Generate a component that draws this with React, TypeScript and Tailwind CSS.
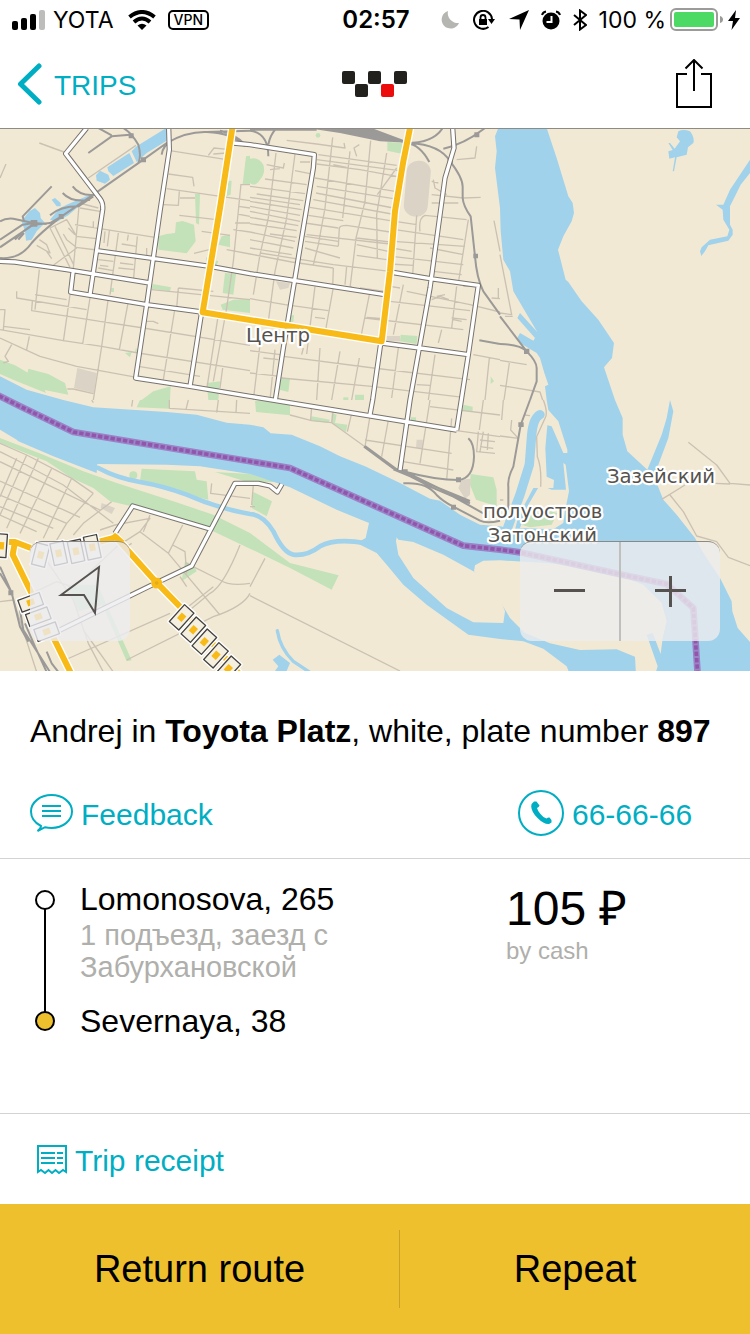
import React from "react";

const tiles = {
  nw: "M118 45L200 75M265 150L408 52M0 150L18 108M510 68L680 95M625 82L642 60L690 65M640 78L680 75M505 138L578 148L582 175M500 182L750 218M538 190L535 232L490 230M540 210H585M538 262L650 275M723 168L700 400L680 540L640 760M723 170H750M715 235L750 240M712 258L750 265M705 285H750M700 305L750 312M605 310L690 322M582 376L640 362M680 365L750 378M238 225L220 420M238 225L295 240M240 240L300 250M225 290L465 328M228 325L290 332M228 358L290 366M150 300L210 418M165 295L222 412M150 300L200 275L230 325M190 318L200 335L225 355M205 300L225 320M110 352L150 375L140 350L118 335M140 370L155 392M160 412L230 360M280 280V300M315 310L312 345M328 308L322 355M355 315L330 500M385 320L382 338M412 325L400 460M365 348L410 355M295 395L340 400M300 412L325 415M295 420L340 428M360 405L400 410M355 420L405 425M118 425L105 545M50 490V510L260 545M105 500L200 515M97 520L95 548L300 580M210 500L190 640M270 510L248 648M325 510L305 655L280 816M385 520L358 665M0 545H15L10 605M10 595L90 605M0 605L190 638L305 655L415 675L750 728M0 630L120 685L230 715L410 748M88 625L80 665M35 650L15 685L25 700L10 705M300 580L430 600L750 652M440 580L460 580L475 587M525 540L490 755M415 715L600 745M655 560L620 785M535 480L530 540M535 480L640 490M455 485L750 515M668 720L660 780M202 783H220L280 797M440 360V385",
  n: "M110 37L200 48L285 60L282 45M320 85L312 60L328 50M78 75L55 270L30 380L10 500M135 78L110 270L75 430L55 580M248 28L225 240L205 350L190 410M300 70L278 270M362 38L345 220L318 330L300 480M410 75L380 260L382 390M440 120L382 200M50 110L100 120L103 105M60 125L90 122M150 102H180M205 80L440 112M200 95L448 128M200 108L330 125L440 145M135 128L180 137M250 110L290 118M45 153L170 170M195 150L435 190M0 175L165 197M200 175L430 212M20 198L160 218M198 195L430 240M0 208L150 230M190 215L425 258M0 220L155 245M180 238L420 278M0 235L150 262M175 262L280 278M0 250L150 280M268 300Q270 292 290 292L420 312M0 268L145 293M165 285L265 300M268 300L265 355M0 287L140 308M170 320L420 348M60 318L140 328M165 325L265 340M0 312L135 340M165 340L265 355M320 330L420 342M0 335L130 360M165 360L270 390M0 360L125 380M320 350L415 370M0 378L125 402L250 420M30 375L250 410L420 430M320 382L410 395M250 420L248 478M330 480L415 492M290 415L285 470M195 475L170 678M250 478L228 600M360 490L330 640M305 475L300 490M0 512L105 530L235 548M195 568L225 572M350 568L400 572M345 570L640 605M420 520L660 548M545 160L565 165M550 155L555 180L590 200M545 200L640 210L692 208M545 225L625 225M510 310Q505 270 525 262L650 275M435 280L500 290M500 262L488 440M435 305L640 335M430 340L645 355M425 360L485 370M540 360L640 380M425 385L640 410M420 408L490 412M550 430L635 440M655 275L625 465M680 55L675 90L620 95M420 475L450 480M460 470L430 620M470 490L660 530M545 515L570 505L597 515M560 505L585 500M620 475L605 600M640 475H675M605 570L650 575M610 575L635 580M575 605L565 645M732 278L750 370M660 530L750 552M725 510L750 512M745 480V510M30 650L10 816M75 665L60 816M0 668L90 680M40 690L85 695M160 660L155 680M210 660L200 816M270 670L245 816M328 690L305 816M100 685L370 720L660 755M95 750L365 775L640 808M445 660L425 810M555 680L535 816M670 680L750 695M718 690L705 816M500 770L540 772M0 735L90 745",
  ne: "M0 380L35 560L0 555M15 565H38M0 697L80 710M28 705L12 816M0 772L120 792L128 816",
  sw: "M275 0L280 8M398 0L395 20M508 0V25L750 40M565 0L558 28M655 0L650 38M710 0L708 38M0 130L80 165L215 235L280 280M0 155L50 180L190 255L340 370M0 185L300 330M0 243L240 352M0 285L200 370M0 320L160 385M0 345L110 395M50 175L0 290M80 165L0 345M115 175L20 385M155 205L60 400M215 235L130 415M280 280L200 370L170 420M335 305L250 370L220 405M300 390L345 375L450 355L420 395L350 440L265 520M420 395L505 460L660 645M450 345L430 395M548 375L505 460M518 435L555 455L560 520M720 435Q670 560 630 580L545 650M750 550Q690 560 660 540L560 490M195 780L510 640M310 816L265 730L220 600L125 460M540 640L640 560M750 580Q730 620 640 650L380 780M540 530L560 560M130 430L100 480M340 816L250 690M0 605L40 600L110 816M365 450L395 430M95 580L170 545L230 565M635 250L632 280L750 295",
  s: "M120 45L185 62L245 68L345 140L425 200M185 20L182 60M250 28L245 68M305 40L292 95M360 48L345 140M415 60L395 170M540 0L510 190M345 120L605 160M460 185L610 210M605 55L590 240M540 20L750 45M685 95L680 155L735 160M700 95L690 155M690 120L735 125M690 140L730 145M715 100L712 150M620 92L750 110M700 0L688 90M10 255L5 315M0 320H15M45 475L0 560M0 587L450 813",
  se: "M10 0L5 60M0 108L55 115M35 60L32 90L55 115M75 45L90 47M130 0Q145 40 135 55L110 110L112 170Q125 200 122 260M0 300H10M565 127L650 195L690 250L750 255M645 250L690 252M485 298L555 255M510 285L550 335L590 408L650 425L685 472L750 497",
};

const rails = {
  nw: "M0 390Q60 395 95 345Q120 315 185 265L280 200L430 95L500 45Q560 10 620 12L750 8M0 335L68 290L100 285M0 358L100 290L150 285L185 265M45 335L70 310L100 288M55 335L72 315M0 280Q15 270 40 272L100 285L140 288M155 175L68 265L72 280M150 262Q180 235 235 235L280 205M188 195Q215 225 270 215M218 175Q240 205 285 200M265 75L335 25L390 20M295 0L335 22M370 0Q395 15 415 50Q425 85 415 105M485 80Q490 50 510 45M620 12Q700 15 735 55M660 8Q710 20 735 50",
  n: "M0 8Q55 15 55 85M55 50Q60 20 80 0M0 5H200M365 10L470 45Q550 45 578 0M470 45Q510 50 538 102M480 45Q570 50 600 100Q640 150 638 180V210Q640 235 662 265L675 385Q680 450 700 490L750 560M580 62Q640 50 705 0M688 637L750 648",
  ne: "M0 565L80 670Q110 700 110 720V760L90 816M0 648Q60 650 80 670",
  sw: "M0 500L35 578L60 680L85 725M0 520L30 570M60 630L70 690L150 816M75 670L105 740L140 816M140 755L155 790L175 816",
  s: "M342 140L430 205L465 215Q560 240 625 240Q670 235 672 170Q672 130 655 115M345 138L440 208L545 262L610 290L700 340M465 215L660 310M430 208L660 303M460 250Q530 245 560 285Q580 305 610 320L690 362Q710 372 750 362",
  se: "M90 0L62 75L40 200Q22 235 25 260V330",
};

const offsets: Record<string, string> = {
  nw: "translate(0 0)",
  n: "translate(750 0)",
  ne: "translate(1500 0)",
  sw: "translate(0 816)",
  s: "translate(750 816)",
  se: "translate(1500 816)",
};

const mainRoads =
  "M260 0L197 77L300 212Q310 225 308 245L270 500M506 0L508 65L480 250L440 530L407 750L570 775L750 805L1370 906M0 400L45 402L200 425L450 465M290 368L630 415L750 437L1155 500M220 425L212 492L440 530L605 552L570 775M700 45L750 50L943 80L940 120L850 660L826 816M1358 0L1362 60L1335 150L1290 480L1230 816L1200 1026M1170 432L1290 452L1435 472L1405 680L1370 906M1145 645L1260 660L1405 680M1143 640L1118 816L1110 860M345 1216L398 1134L630 1203M750 1066H705L575 1314L470 1364L180 1506M705 1066L775 1066L810 1074L832 1092L846 1068";

const tripRoute =
  "M697 0L660 240L608 553L1145 640L1170 430L1185 250L1210 100L1230 0M0 1242H45L92 1260M45 1242L38 1280L90 1386L215 1640M295 1242L348 1228L470 1364L540 1436L720 1640";

const ferryLine =
  "M-20 795L60 835L220 912L400 942L750 1000L870 1020L1390 1253L1500 1265L1560 1273L1860 1339L2000 1368L2080 1440L2086 1530L2093 1640";

const bridges: [number, number, number, number, number][] = [
  [3, 1253, 34, 70, 4],
  [122, 1281, 40, 66, 14],
  [176, 1276, 40, 66, -12],
  [228, 1270, 40, 66, -12],
  [277, 1258, 40, 70, -12],
  [92, 1423, 38, 68, 70],
  [115, 1466, 38, 68, 70],
  [140, 1511, 38, 68, 70],
  [545, 1468, 38, 68, 42],
  [580, 1505, 38, 68, 42],
  [613, 1541, 38, 68, 42],
  [648, 1582, 38, 68, 42],
  [685, 1622, 38, 68, 42],
];

function TripMap() {
  return (
    <svg
      viewBox="0 3 2250 1626"
      className="block h-auto w-full"
      role="img"
      aria-label="Trip route map"
      fill="none"
      strokeLinejoin="round"
    >
      <rect width="2250" height="1632" fill="#f2e9d4" />
      <g fill="#c3e2b9">
        <path d="M475 325L500 318L525 315L528 283L548 279L582 290L587 340L560 376L475 365ZM728 168L738 85L750 83V168ZM665 325L690 320V358L655 350ZM618 388L630 392L655 400L650 412L622 410ZM675 435L708 437L700 500L668 495ZM458 468L513 478L510 490L455 482ZM662 530L700 515L750 512V555L668 545ZM585 198H600L597 290L588 285ZM685 158H695L692 200L680 205ZM332 480H342V492H332ZM375 675L395 672L390 688ZM408 658L412 670L405 672ZM0 695L45 712L120 755L138 795L50 760L0 738ZM85 722L145 738L195 765L205 800L130 785L82 740ZM425 816L460 790L512 775L510 816ZM620 765L660 760L655 816H625Z" />
        <path d="M750 92Q775 85 790 110Q798 135 780 155Q765 178 750 165L735 140V105Z" />
        <circle cx="954" cy="22" r="7" />
        <path d="M1162 42L1210 45L1208 78L1162 68ZM1202 620L1252 624L1250 648L1200 640ZM840 747L870 752L865 792L838 785ZM870 562H882L880 582H868ZM1065 800H1092V816H1065ZM1030 808H1045V816H1030ZM1472 745L1482 760L1472 768Z" />
        <path d="M420 816H508V842L410 838ZM0 930L130 980L250 1030L350 1065L520 1120L640 1160L750 1215L870 1305L1016 1342L995 1385L870 1320L750 1262L630 1205L395 1135L330 1120L280 1080L215 1050L140 1000L0 945ZM425 1022L585 1030L590 1055L620 1060L625 1115L560 1100L420 1060ZM645 1032L750 1038L830 1062L800 1062L735 1060ZM760 1092L816 1120L800 1165L755 1140ZM555 1300L580 1310L590 1330L545 1360Z" />
        <circle cx="400" cy="1042" r="12" />
        <path d="M765 818H870V862L768 852ZM935 865L990 875L985 884L930 878ZM995 855L1010 860L1005 885L1042 890L1038 912L995 885ZM1390 830L1418 836V850L1388 848ZM1412 1038L1480 1048L1490 1085V1135L1428 1115L1410 1070ZM1233 868H1248V880H1233ZM285 1380L300 1385L395 1597L380 1600ZM200 1370L290 1370L310 1430L235 1450Z" />
      </g>
      <g fill="#dad3c6">
        <rect x="1216" y="98" width="72" height="168" rx="34" transform="rotate(5 1252 180)" />
        <path d="M232 720L290 735L282 795L222 780ZM828 460L870 465L865 480L840 485ZM1160 624H1200V640H1160ZM1385 1055L1412 1052L1410 1100L1395 1112L1375 1080ZM1250 935H1268V960H1248ZM305 1125L345 1140L335 1158L302 1140Z" />
      </g>
      <g fill="#a0d2ec">
        <path d="M0 745L80 785L190 816L280 838L500 852L590 860L680 884L750 890L790 898L812 916L875 920L960 955L1020 985L1095 1015L1200 1065L1290 1112L1320 1118L1380 1160L1440 1190L1500 1195L1545 1205L1555 1165L1600 1080L1660 1080L1662 1056L1640 1046L1636 960L1642 892L1655 895L1690 975H1702V965L1675 880L1645 846L1640 816L1635 775L1645 770L1633 735L1620 690L1610 675L1560 645L1552 630L1560 615L1600 638L1605 630L1552 570L1560 555L1612 612L1575 550L1540 490L1530 430L1510 395L1502 310L1500 240L1485 120L1490 70L1485 25L1495 0H1640L1670 90L1705 205L1718 225L1722 255L1715 280L1690 325L1674 365L1697 455L1705 462L1745 520L1795 575L1842 645L1836 690L1812 718L1845 816L1868 870V920L1882 970L1942 1025L1985 920L2000 870L2010 816L2020 850L2005 930L1975 1010L1970 1040L1972 1070L1990 1115L2030 1160L2085 1230L2110 1275L2160 1350L2195 1420L2197 1450L2213 1500L2250 1542V1640H1710L1700 1615L1630 1562L1570 1540L1500 1533L1405 1520L1280 1430L1210 1370L1160 1310L1130 1275L1070 1245L1097 1230L1107 1185L1010 1145L870 1078L840 1068L750 1038L600 1015L500 1010L292 1008L290 1035L160 985L55 940L50 935L0 905Z" />
        <path d="M2035 10Q2050 2 2070 10Q2085 30 2080 45L2064 58L2060 80L2030 88L2022 130H2018L2025 88L2008 92L2005 70L2018 66L2005 45L2010 45L2024 62L2040 40L2030 28ZM2250 95L2190 185L2170 230L2148 230L2168 245L2170 275L2188 305L2182 325L2130 335L2105 358L2100 370L2104 384L2115 370L2125 352L2185 338L2198 320V305L2190 290V235L2222 170L2250 135Z" />
        <path d="M288 142L300 128L325 140L330 155L315 167L290 158ZM322 118L388 75L402 105L340 144L325 130ZM395 70L410 55L490 5L500 0V38L440 75L410 102ZM65 280L88 250L105 240L120 255L122 270L135 285L110 310L95 335L78 338L75 310ZM155 215L165 210L182 225V235H170ZM150 275L180 240L205 228L270 200L280 205L240 232L205 262L170 282Z" />
        <path d="M818 1595L838 1580L870 1605L860 1629H825L835 1615Z" />
      </g>
      <g stroke="#a0d2ec" strokeLinecap="round">
        <path d="M295 1020Q350 1050 420 1062T560 1100Q650 1140 750 1158Q790 1160 820 1210Q850 1275 880 1280Q920 1285 960 1255Q1005 1230 1095 1245" strokeWidth="14" />
        <path d="M832 1508Q840 1560 880 1600L940 1640" strokeWidth="10" />
        <path d="M1620 860Q1600 870 1595 920L1588 1010L1560 1100L1530 1180L1512 1230" strokeWidth="28" />
      </g>
      <g fill="#f2e9d4">
        <path d="M1190 1228L1195 1235L1240 1242L1330 1280L1420 1330L1450 1350L1500 1410L1515 1450L1510 1485L1420 1483L1340 1440L1240 1350L1195 1280L1188 1240Z" />
        <path d="M1425 1312L1450 1298L1500 1297L1640 1305L1760 1318L1850 1340L1930 1370L1985 1425L2000 1480L1988 1530L1982 1578L1958 1515L1940 1520L1973 1615L1965 1640H1908L1905 1586L1850 1564L1740 1566L1650 1546L1575 1515L1530 1470L1500 1420L1422 1330Z" />
        <path d="M1690 1005L1697 1010L1707 1090L1695 1150L1690 1185L1660 1204L1560 1200L1585 1130L1620 1070L1655 1085L1698 1085Z" />
      </g>
      <path d="M1590 1160L1650 1150L1672 1155L1655 1190L1590 1198L1565 1190Z" fill="#c3e2b9" />
      <path d="M920 0H1115L1235 45L1140 40L1020 15Z" fill="#9b9a98" />
      <g stroke="#cbc1b3" strokeWidth="4">
        {Object.entries(tiles).map(([key, d]) => (
          <path key={key} d={d} transform={offsets[key]} />
        ))}
      </g>
      <g stroke="#9b9a98" strokeWidth="6">
        {Object.entries(rails).map(([key, d]) => (
          <path key={key} d={d} transform={offsets[key]} />
        ))}
      </g>
      <path d="M92 276h20v20h-20zM176 258h15v15h-15zM423 88h15v15h-15zM386 16h15v15h-15zM1343 94h16v16h-16zM1420 377h14v14h-14zM1423 13h15v15h-15zM1572 662h16v16h-16zM1368 1048h15v15h-15zM1353 1130h15v15h-15zM1555 883h16v14h-16zM1209 1024h14v14h-14zM25 1387h15v15h-15z" fill="#9b9a98" />
      <path d={mainRoads} stroke="#77736f" strokeWidth="16" />
      <path d={mainRoads} stroke="#fff" strokeWidth="10" />
      <path d={tripRoute} stroke="#fff" strokeWidth="26" />
      <path d={tripRoute} stroke="#f8ba16" strokeWidth="18" />
      <path d="M325 1232L345 1214L375 1240Z" fill="#f8ba16" />
      <circle cx="470" cy="1365" r="11" stroke="#f8ba16" strokeWidth="11" fill="#e3ab1a" />
      {bridges.map(([x, y, w, h, angle]) => (
        <g key={`${x}-${y}`} transform={`translate(${x} ${y}) rotate(${angle})`}>
          <rect x={-w / 2 - 2} y={-h / 2 - 2} width={w + 4} height={h + 4} fill="#f5efe0" stroke="#fff" strokeWidth="8" />
          <rect x={-w / 2} y={-h / 2} width={w} height={h} stroke="#45413d" strokeWidth="4" />
          <rect x="-9" y="-11" width="18" height="22" fill="#f8ba16" />
        </g>
      ))}
      <path d={ferryLine} stroke="#9c82c6" strokeWidth="20" />
      <path d={ferryLine} stroke="#9056ac" strokeWidth="11" strokeDasharray="13 6" />
      <g
        className="font-['DejaVu_Sans',sans-serif]"
        fill="#56534f"
        stroke="#fff"
        strokeWidth="13"
        paintOrder="stroke"
        fontSize="59"
        textAnchor="middle"
      >
        <text x="834" y="642">Центр</text>
        <text x="1983" y="1064">Зазейский</text>
        <text x="1628" y="1170">полуостров</text>
        <text x="1627" y="1242">Затонский</text>
      </g>
    </svg>
  );
}

function StatusBar() {
  return (
    <div className="grid h-10 grid-cols-[1fr_auto_1fr] items-center pl-3 pr-[10px] font-['Inter',sans-serif] text-[23px] leading-10 text-black">
      <div className="flex items-center">
        <svg width="33" height="20" viewBox="0 0 33 20" aria-label="Signal">
          <rect y="11" width="6" height="9" rx="2" />
          <rect x="9" y="8" width="6" height="12" rx="2" />
          <rect x="18" y="4" width="6" height="16" rx="2" />
          <rect x="27" width="6" height="20" rx="2" fill="#bdbdbb" />
        </svg>
        <span className="ml-2">YOTA</span>
        <svg className="ml-[14px]" width="28" height="20" viewBox="0 0 28 20" fill="none" stroke="#000" strokeWidth="4" aria-label="Wi-Fi">
          <path d="M1.500 7Q14 -3 26.500 7" />
          <path d="M6 12Q14 5 22 12" />
          <path d="M9.500 15.500Q14 12 18.500 15.500L14 20Z" fill="#000" stroke="none" />
        </svg>
        <span className="ml-3 rounded-[5px] border-2 border-black px-1 text-[14px] font-medium leading-4">VPN</span>
      </div>
      <span className="text-[24px] font-semibold">02:57</span>
      <div className="flex items-center justify-end">
        <svg width="18" height="18" viewBox="0 0 18 18" fill="#b5b5b1" aria-label="Do not disturb">
          <path d="M7 0A9 9 0 1 0 18 12A10 10 0 0 1 7 0Z" />
        </svg>
        <svg className="ml-[14px]" width="24" height="20" viewBox="0 0 24 20" fill="none" stroke="#000" strokeWidth="2" aria-label="Rotation lock">
          <path d="M15.500 17A9 9 0 1 1 19 9" />
          <path d="M15 9H22L18.500 14Z" fill="#000" stroke="none" />
          <rect x="6" y="9" width="8" height="6" fill="#000" stroke="none" />
          <path d="M7.500 10V7.500a2.500 2.500 0 0 1 5 0V10" strokeWidth="1.800" />
        </svg>
        <svg className="ml-3" width="20" height="20" viewBox="0 0 20 20" aria-label="Location">
          <path d="M20 0L11 20L10.500 9.500L0 9Z" />
        </svg>
        <svg className="ml-3" width="20" height="20" viewBox="0 0 20 20" aria-label="Alarm">
          <circle cx="10" cy="11" r="8.500" />
          <path d="M1 5Q2 2 5 1.500M15 1.500Q18 2 19 5" fill="none" stroke="#000" strokeWidth="2" />
          <path d="M10.500 6V12H5.500" fill="none" stroke="#fff" strokeWidth="2" />
        </svg>
        <svg className="ml-3" width="14" height="22" viewBox="0 0 14 22" fill="none" stroke="#000" strokeWidth="2" aria-label="Bluetooth">
          <path d="M1 6L13 16L7 20.500V1.500L13 6L1 16" />
        </svg>
        <span className="ml-3">100 %</span>
        <svg className="ml-1" width="54" height="24" viewBox="0 0 54 24" aria-label="Battery">
          <rect x="1" y="1" width="46" height="21" rx="5" fill="none" stroke="#9b9b99" strokeWidth="2" />
          <rect x="4" y="4" width="40" height="15" rx="2" fill="#4cd964" />
          <path d="M50 8Q53 9 53 11.500T50 15Z" fill="#9b9b99" />
        </svg>
        <svg className="ml-1" width="12" height="20" viewBox="0 0 12 20" aria-label="Charging">
          <path d="M8 0L0 11H5L3.500 20L12 8H7Z" />
        </svg>
      </div>
    </div>
  );
}

export default function App() {
  return (
    <div className="flex min-h-screen w-full flex-col bg-white font-['Liberation_Sans',sans-serif] text-black">
      <header className="border-b border-[#8e8b86]">
        <StatusBar />
        <nav className="grid h-[88px] grid-cols-3 items-center px-4">
          <a href="#trips" className="flex items-center gap-3 text-[28px] leading-8 text-[#00aec3]">
            <svg width="26" height="44" viewBox="0 0 26 44" fill="none" stroke="currentColor" strokeWidth="5" strokeLinecap="round" aria-hidden="true">
              <path d="M23 4L4.500 22L23 40" strokeLinejoin="round" />
            </svg>
            <span className="pt-1">TRIPS</span>
          </a>
          <svg className="justify-self-center" width="65" height="26" viewBox="0 0 65 26" fill="#22211d" aria-label="Taxi">
            <rect width="13" height="13" rx="2" />
            <rect x="13" y="13" width="13" height="13" rx="2" />
            <rect x="26" width="13" height="13" rx="2" />
            <rect x="52" width="13" height="13" rx="2" />
            <rect x="39" y="13" width="13" height="13" rx="2" fill="#ec0c0c" />
          </svg>
          <button type="button" aria-label="Share" className="mr-[22px] justify-self-end">
            <svg width="36" height="50" viewBox="0 0 36 50" fill="none" stroke="#000" strokeWidth="2">
              <path d="M11 15H1V48H35V15H25M18 32V1M9.500 9.500L18 1L26.500 9.500" />
            </svg>
          </button>
        </nav>
      </header>

      <section className="relative">
        <TripMap />
        <button type="button" aria-label="My location" className="absolute bottom-[30px] left-[30px] h-[100px] w-[100px] rounded-xl border-t border-[#8b8985] bg-[#ececf0]/80">
          <svg width="100" height="99" viewBox="0 0 100 99" fill="none" stroke="#55524f" strokeWidth="2" aria-hidden="true">
            <path d="M31 53L69 25L65 71L54 53Z" />
          </svg>
        </button>
        <div className="absolute bottom-[30px] right-[30px] flex h-[100px] w-[200px] rounded-xl border-t border-[#8b8985] bg-[#ececee]/80">
          <button type="button" aria-label="Zoom out" className="flex flex-1 items-center justify-center border-r-2 border-[#bfbfbd]">
            <svg width="32" height="32" viewBox="0 0 32 32" stroke="#55524f" strokeWidth="3" aria-hidden="true">
              <path d="M0 14.500H31" />
            </svg>
          </button>
          <button type="button" aria-label="Zoom in" className="flex flex-1 items-center justify-center">
            <svg width="32" height="32" viewBox="0 0 32 32" stroke="#55524f" strokeWidth="3" aria-hidden="true">
              <path d="M0 14.500H31M15.500 0V31" />
            </svg>
          </button>
        </div>
      </section>

      <main className="flex flex-1 flex-col">
        <section className="border-b border-[#d3d3d3] px-[30px] pb-[22px] pt-10">
          <h1 className="text-[32px] leading-10">
            Andrej in <b>Toyota Platz</b>, white, plate number <b>897</b>
          </h1>
          <div className="mt-[39px] grid grid-cols-[488px_1fr] text-[30px] leading-[42px] text-[#00aec3]">
            <a href="#feedback" className="flex items-center gap-2">
              <svg width="43" height="38" viewBox="0 0 43 38" fill="none" stroke="currentColor" strokeWidth="2" aria-hidden="true">
                <path d="M11 32C5 29 1 24 1 17.500C1 8.500 10 1 21.500 1S42 8.500 42 17.500S33 34 21.500 34C19 34 17 33.700 15 33.200L7.500 37C10 35 11 34 11 32Z" />
                <path d="M12 12H31M12 17H31M12 22H31" />
              </svg>
              <span className="pt-1">Feedback</span>
            </a>
            <a href="tel:666666" className="flex items-center gap-2">
              <svg width="46" height="46" viewBox="0 0 46 46" fill="currentColor" aria-hidden="true">
                <circle cx="23" cy="23" r="22" fill="none" stroke="currentColor" strokeWidth="2" />
                <path d="M16 11.500L18.500 11.500L21.500 15.500Q21 17 19 18Q19.500 20.500 22.500 24Q25.500 28 28.500 28.500Q30 27 31.500 27.500L33.500 30V32.500L31 34Q26 34.500 19.500 28Q13.500 22 13.200 16.500Q13.500 13 16 11.500Z" />
              </svg>
              <span className="pt-1">66-66-66</span>
            </a>
          </div>
        </section>

        <section className="grid min-h-[255px] grid-cols-[50px_396px_1fr] items-start border-b border-[#d3d3d3] px-[30px] pt-5">
          <svg className="mt-[10px] ml-[5px]" width="20" height="142" viewBox="0 0 20 142" stroke="#000" strokeWidth="2" aria-hidden="true">
            <path d="M10 19V123" />
            <circle cx="10" cy="11" r="9" fill="#fff" />
            <circle cx="10" cy="132" r="9" fill="#eec02d" />
          </svg>
          <div>
            <p className="text-[32px] leading-10">Lomonosova, 265</p>
            <p className="w-[290px] text-[29px] leading-8 text-[#afafab]">1 подъезд, заезд с Забурхановской</p>
            <p className="mt-[18px] text-[32px] leading-10">Severnaya, 38</p>
          </div>
          <div className="pl-[30px]">
            <p className="pt-1 text-[48px] leading-[52px]">105 ₽</p>
            <p className="text-[24px] leading-8 text-[#afafab]">by cash</p>
          </div>
        </section>

        <a href="#receipt" className="flex h-[90px] items-center gap-2 px-[37px] text-[30px] leading-10 text-[#00aec3]">
          <svg width="30" height="29" viewBox="0 0 30 29" fill="none" stroke="currentColor" strokeWidth="2" aria-hidden="true">
            <path d="M1 27V1H29V27L26 25L22 28L18.500 25L15 28L11.500 25L8 28L4 25Z" />
            <path d="M4 8H18M20 8H26M4 13H18M20 13H26M4 18H18M20 18H26" />
          </svg>
          <span className="pt-1">Trip receipt</span>
        </a>
      </main>

      <footer className="flex h-[130px] items-center bg-[#eec02d] text-[38px]">
        <button type="button" className="h-[78px] w-[400px] shrink-0 border-r border-[#c9a227]">Return route</button>
        <button type="button" className="h-[78px] flex-1">Repeat</button>
      </footer>
    </div>
  );
}
